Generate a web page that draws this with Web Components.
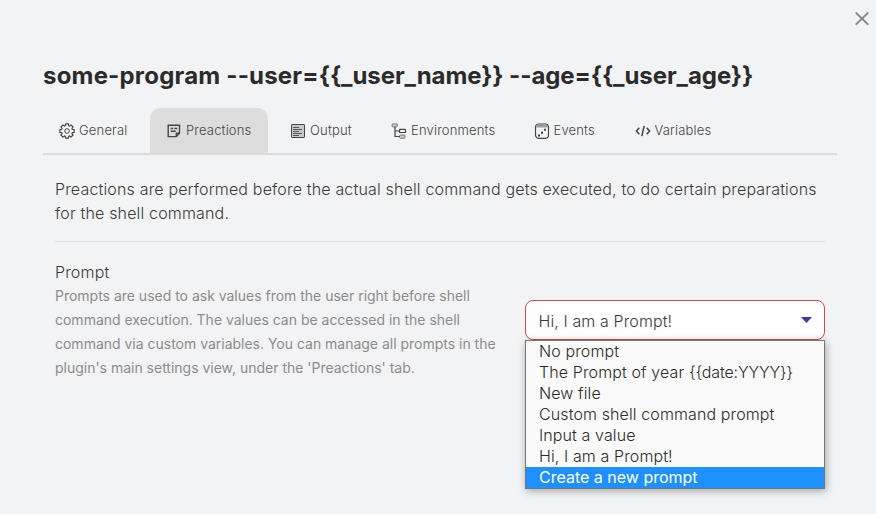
<!DOCTYPE html>
<html lang="en"><head><meta charset="utf-8"><title>Shell command settings</title>
<style>
html,body{margin:0;height:100%;background:#f2f3f5}
body{font-family:Inter,"Liberation Sans",sans-serif;color:#2e3338;overflow:hidden}
</style></head><body>
<settings-modal>
<span slot="heading"><span style="letter-spacing:.19px">some-program --user=</span><span style="letter-spacing:-.08px">{{_user_name}} --age={{_user_age}}</span></span>
<tab-bar slot="tabs">
<tab-item icon="gear" style="--w:107px">General</tab-item>
<tab-item icon="note" active style="--w:118px;margin-right:6px">Preactions</tab-item>
<tab-item icon="lines" style="--w:101px">Output</tab-item>
<tab-item icon="tree" style="--w:142.5px">Environments</tab-item>
<tab-item icon="dice" style="--w:101px">Events</tab-item>
<tab-item icon="code" style="--w:110px">Variables</tab-item>
</tab-bar>
<intro-text>Preactions are performed before the actual shell command gets executed, to do certain preparations<br>for the shell command.</intro-text>
<setting-row name="Prompt">
<span slot="desc">Prompts are used to ask values from the user right before shell<br>command execution. The values can be accessed in the shell<br>command via custom variables. You can manage all prompts in the<br>plugin's main settings view, under the 'Preactions' tab.</span>
<drop-down slot="control" value="Hi, I am a Prompt!">
<menu-option>No prompt</menu-option>
<menu-option>The Prompt of year <span style="letter-spacing:-.13px">{{date:YYYY}}</span></menu-option>
<menu-option>New file</menu-option>
<menu-option>Custom shell command prompt</menu-option>
<menu-option>Input a value</menu-option>
<menu-option>Hi, I am a Prompt!</menu-option>
<menu-option selected>Create a new prompt</menu-option>
</drop-down>
</setting-row>
</settings-modal>
<script>
const define=(name,render)=>customElements.define(name,class extends HTMLElement{
  connectedCallback(){ if(!this.shadowRoot) this.attachShadow({mode:'open'}).innerHTML=render(this); }
});
const gear=()=>{
  let d='';
  const n=8,p=(r,a)=>(8+r*Math.cos(a)).toFixed(2)+' '+(8+r*Math.sin(a)).toFixed(2);
  for(let i=0;i<n;i++){const a=i*Math.PI/4;
    d+=(i?'L':'M')+p(5.5,a-.31)+'L'+p(7.3,a-.2)+'L'+p(7.3,a+.2)+'L'+p(5.5,a+.31);}
  return `<path stroke-width="1.15" stroke-linejoin="round" d="${d}Z"/><circle cx="8" cy="8" r="2.3"/>`;
};
const icons={
 gear:gear(),
 note:'<path stroke-width="1.4" d="M2.2 2.2h11.3v8L10.3 13.6H2.2zM13.5 10.2h-3.2v3.4"/><path stroke-width="1.5" d="M4.7 5.6h2.5M8.4 5.6h2.8M4.7 8.2h5"/>',
 lines:'<rect x="1.5" y="1.5" width="13" height="13" rx=".6" fill="#c8c9ca"/><path stroke="#555" d="M3 4.5h6M3 6.5h9M3 8.5h6M3 10.5h9M3 12.5h6"/>',
 tree:'<rect x="1" y=".9" width="5.4" height="3" rx="1" stroke="#777" fill="#ccc"/><rect x="8.5" y="6.3" width="6" height="3.2" rx=".6" stroke-width="1.2"/><rect x="8.5" y="12" width="5.6" height="3.2" rx="1" stroke="#777" fill="#ccc"/><path stroke-width="1.2" d="M4 4v9.5h4.5M4 8h4.5"/>',
 dice:'<rect x="1.5" y="1" width="13" height="14.3" rx="3.2" stroke-width="1.2"/><path d="M3 2.4h10" stroke="#999" stroke-width="2"/><path d="M2.3 3.9h11.4" stroke-width=".6"/><path stroke="none" fill="currentColor" d="M10 5.8h2v2h-2zM7 8.7h2v2H7zM4 11.5h2v2H4z"/>',
 code:'<path stroke-width="1.5" d="M4.3 4.8L1.4 8l2.9 3.2M11.7 4.8L14.6 8l-2.9 3.2M9.2 2.8L6.8 13.2"/>'
};
define('settings-modal',()=>`<style>
:host{display:block;position:relative;box-sizing:border-box;height:514px;padding:60px 39px 0 43px}
h1{margin:0;height:48px;font-size:24px;line-height:32px;font-weight:700;white-space:nowrap;color:#2b2b2b}
.close{position:absolute;left:854px;top:11px;width:16px;height:16px}
section{padding:0 12px}
</style><svg class="close" viewBox="0 0 16 16" fill="none" stroke="#858585" stroke-width="2" stroke-linecap="round"><path d="M2.3 2.1l11.4 11M13.7 2.1l-11.4 11"/></svg>
<h1><slot name="heading"></slot></h1><slot name="tabs"></slot><section><slot></slot></section>`);
define('tab-bar',()=>`<style>:host{display:flex;height:45px;border-bottom:2px solid #d9dbdd}</style><slot></slot>`);
define('tab-item',e=>`<style>
:host{display:flex;box-sizing:border-box;width:var(--w);padding-left:16px;align-items:center;gap:4px;font-size:13px;font-weight:360;color:#444;letter-spacing:.18px;border-radius:10px 10px 0 0;white-space:nowrap}
:host([active]){background:#ddd}svg{width:16px;height:16px;flex:none;color:#444}.label{padding-bottom:1px}
</style><svg viewBox="0 0 16 16" fill="none" stroke="currentColor">${icons[e.getAttribute('icon')]}</svg><span class="label"><slot></slot></span>`);
define('intro-text',()=>`<style>:host{display:block;padding-top:22px;height:64px;border-bottom:1px solid #dcddde;font-size:16px;font-weight:350;line-height:24px;color:#3a3a3a;white-space:nowrap;letter-spacing:.165px}</style><slot></slot>`);
define('setting-row',e=>`<style>
:host{display:flex;justify-content:space-between;padding-top:18px}
.name{font-size:16px;font-weight:350;line-height:24px;color:#3a3a3a;letter-spacing:.165px}.desc{font-size:14px;line-height:24px;color:#8c8c8c;white-space:nowrap;letter-spacing:-.01px}
.control{padding-top:40px}
</style><div><div class="name">${e.getAttribute('name')}</div><div class="desc"><slot name="desc"></slot></div></div><div class="control"><slot name="control"></slot></div>`);
define('drop-down',e=>`<style>
:host{display:block;position:relative;width:300px;font-size:16px;font-weight:350;letter-spacing:.11px}
.box{box-sizing:border-box;height:40px;border:1px solid #d04a4a;border-radius:8px;background:#fff;display:flex;align-items:center;justify-content:space-between;padding:2px 12px 0 12.5px;color:#3a3a3a}
svg{width:11px;height:6px;margin-bottom:3px}
.menu{position:absolute;left:0;top:40px;width:300px;box-sizing:border-box;border:1px solid #767676;background:#fafafa;box-shadow:1px 2px 8px #0005}
</style><div class="box"><span>${e.getAttribute('value')}</span><svg viewBox="0 0 11 6"><path d="M0 0h11L5.5 6z" fill="#483699"/></svg></div><div class="menu"><slot></slot></div>`);
define('menu-option',()=>`<style>:host{display:block;height:21px;line-height:21px;padding-left:13px;color:#2b2b2b;white-space:nowrap}:host([selected]){background:#1e90ff;color:#fff;font-weight:400;letter-spacing:0}</style><slot></slot>`);
</script></body></html>
